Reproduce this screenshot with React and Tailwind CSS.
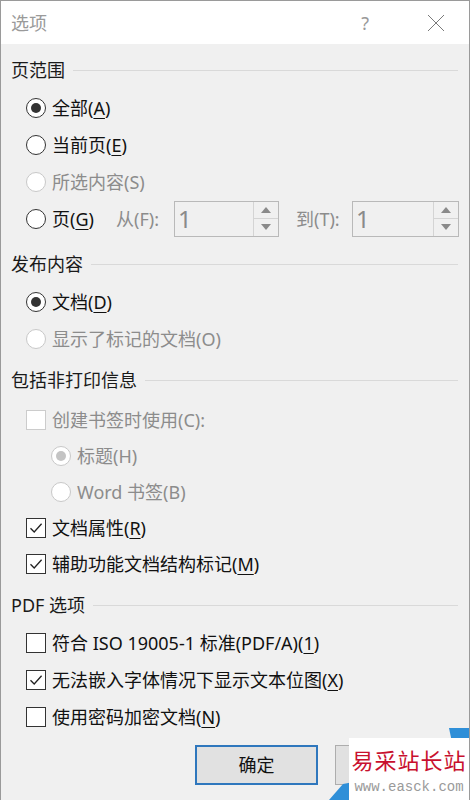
import React from 'react'

const font = { fontFamily: '"Noto Sans", "Noto Sans CJK SC", sans-serif' }

function Radio({ checked, disabled }) {
  return (
    <span
      className={`w-[20px] h-[20px] shrink-0 rounded-full border flex items-center justify-center bg-white ${
        disabled ? 'border-[#c8c8c8]' : 'border-[#333333]'
      }`}
    >
      {checked && (
        <span className={`w-[10px] h-[10px] rounded-full ${disabled ? 'bg-[#c4c4c4]' : 'bg-[#333333]'}`} />
      )}
    </span>
  )
}

function Check({ checked, disabled }) {
  return (
    <span
      className={`w-[20px] h-[20px] shrink-0 border flex items-center justify-center bg-white ${
        disabled ? 'border-[#cccccc]' : 'border-[#333333]'
      }`}
    >
      {checked && (
        <svg width="16" height="16" viewBox="0 0 16 16">
          <path d="M2.5 8.2 L6.2 12 L13.6 3.8" fill="none" stroke="#222" strokeWidth="1.3" />
        </svg>
      )}
    </span>
  )
}

function U({ children }) {
  return <span className="underline underline-offset-[3px] decoration-1">{children}</span>
}

function Header({ children, className = '' }) {
  return (
    <div className={`flex items-center h-[38px] pl-[10px] pr-[11px] text-[18px] text-[#1a1a1a] ${className}`}>
      <span className="leading-none">{children}</span>
      <div className="flex-1 h-px bg-[#d9d9d9] ml-[8px]" />
    </div>
  )
}

function Row({ control, children, disabled, indent, h = 'h-[37px]' }) {
  return (
    <div className={`flex items-center ${h} ${indent ? 'pl-[50px]' : 'pl-[25px]'}`}>
      {control}
      <span
        className={`ml-[6px] text-[18px] leading-none whitespace-nowrap ${
          disabled ? 'text-[#8c8c8c]' : 'text-[#111111]'
        }`}
      >
        {children}
      </span>
    </div>
  )
}

function Spinner({ w }) {
  return (
    <div className={`${w} h-[36px] border border-[#b9b9b9] flex`}>
      <div className="flex-1 flex items-center pl-[3px] text-[24px] leading-none text-[#8a8a8a]">1</div>
      <div className="w-[25px] flex flex-col border-l border-[#d4d4d4]">
        <div className="flex-1 flex items-center justify-center border-b border-[#d4d4d4]">
          <svg width="10" height="6" viewBox="0 0 10 6">
            <path d="M0 6 L5 0 L10 6 Z" fill="#8a8a8a" />
          </svg>
        </div>
        <div className="flex-1 flex items-center justify-center">
          <svg width="10" height="6" viewBox="0 0 10 6">
            <path d="M0 0 L5 6 L10 0 Z" fill="#8a8a8a" />
          </svg>
        </div>
      </div>
    </div>
  )
}

function Watermark() {
  return (
    <div className="absolute right-0 bottom-0 w-[140px] h-[72px]">
      <svg className="absolute inset-0" width="140" height="72" viewBox="0 0 140 72">
        <polygon points="120,0 140,0 140,18 125,24" fill="#2f8fd8" />
        <polygon points="0,72 30,72 35,52 14,56" fill="#2f8fd8" />
      </svg>
      <div className="absolute left-[20px] top-[10px] right-0 bottom-0 bg-white flex flex-col items-center">
        <div
          className="mt-[10px] text-[22px] leading-none tracking-[1px] text-[#c8102e]"
          style={{ fontFamily: '"Noto Sans CJK SC", serif' }}
        >
          易采站长站
        </div>
        <div
          className="mt-[10px] text-[14px] leading-none text-[#9a9a9a]"
          style={{ fontFamily: '"Liberation Mono", monospace' }}
        >
          www.easck.com
        </div>
      </div>
    </div>
  )
}

export default function App() {
  return (
    <div
      className="relative w-[470px] h-[800px] overflow-hidden bg-[#f0f0f0] border-l border-t border-r border-[#9a9a9a]"
      style={font}
    >
      {/* Title bar */}
      <div className="h-[43px] bg-white flex items-center pl-[10px] text-[18px] text-[#9a9a9a]">
        <span className="leading-none">选项</span>
        <span className="ml-auto mr-[58px] leading-none">?</span>
        <svg className="mr-[24px]" width="18" height="18" viewBox="0 0 18 18">
          <path d="M1 1 L17 17 M17 1 L1 17" stroke="#7a7a7a" strokeWidth="1" />
        </svg>
      </div>

      {/* 页范围 */}
      <Header className="mt-[7px]">页范围</Header>
      <Row control={<Radio checked />}>
        全部(<U>A</U>)
      </Row>
      <Row control={<Radio />}>
        当前页(<U>E</U>)
      </Row>
      <Row control={<Radio disabled />} disabled>
        所选内容(S)
      </Row>
      <div className="flex items-center h-[37px] pl-[25px]">
        <Radio />
        <span className="ml-[6px] w-[64px] text-[18px] leading-none text-[#111111]">
          页(<U>G</U>)
        </span>
        <span className="w-[58px] text-[18px] leading-none text-[#8c8c8c]">从(F):</span>
        <Spinner w="w-[105px]" />
        <span className="ml-[17px] w-[56px] text-[18px] leading-none text-[#8c8c8c]">到(T):</span>
        <Spinner w="w-[107px]" />
      </div>

      {/* 发布内容 */}
      <Header className="mt-[8px]">发布内容</Header>
      <Row control={<Radio checked />}>
        文档(<U>D</U>)
      </Row>
      <Row control={<Radio disabled />} disabled>
        显示了标记的文档(O)
      </Row>

      {/* 包括非打印信息 */}
      <Header className="mt-[4px]">包括非打印信息</Header>
      <div className="mt-[3px]">
        <Row h="h-[36px]" control={<Check disabled />} disabled>
          创建书签时使用(C):
        </Row>
        <Row h="h-[36px]" indent control={<Radio checked disabled />} disabled>
          标题(H)
        </Row>
        <Row h="h-[36px]" indent control={<Radio disabled />} disabled>
          Word 书签(B)
        </Row>
        <Row h="h-[36px]" control={<Check checked />}>
          文档属性(<U>R</U>)
        </Row>
        <Row h="h-[36px]" control={<Check checked />}>
          辅助功能文档结构标记(<U>M</U>)
        </Row>
      </div>

      {/* PDF 选项 */}
      <Header className="mt-[4px]">PDF 选项</Header>
      <Row control={<Check />}>
        符合 ISO 19005-1 标准(PDF/A)(<U>1</U>)
      </Row>
      <Row control={<Check checked />}>
        无法嵌入字体情况下显示文本位图(<U>X</U>)
      </Row>
      <Row control={<Check />}>
        使用密码加密文档(<U>N</U>)
      </Row>

      {/* Buttons (second one is hidden under the watermark) */}
      <div className="flex mt-[10px] pl-[194px]">
        <button className="w-[123px] h-[40px] border-2 border-[#2f77bd] bg-[#e1e1e1] text-[18px] text-[#111111] leading-none">
          确定
        </button>
        <button className="ml-[17px] w-[123px] h-[40px] border border-[#adadad] bg-[#e1e1e1]" />
      </div>

      <Watermark />
    </div>
  )
}
